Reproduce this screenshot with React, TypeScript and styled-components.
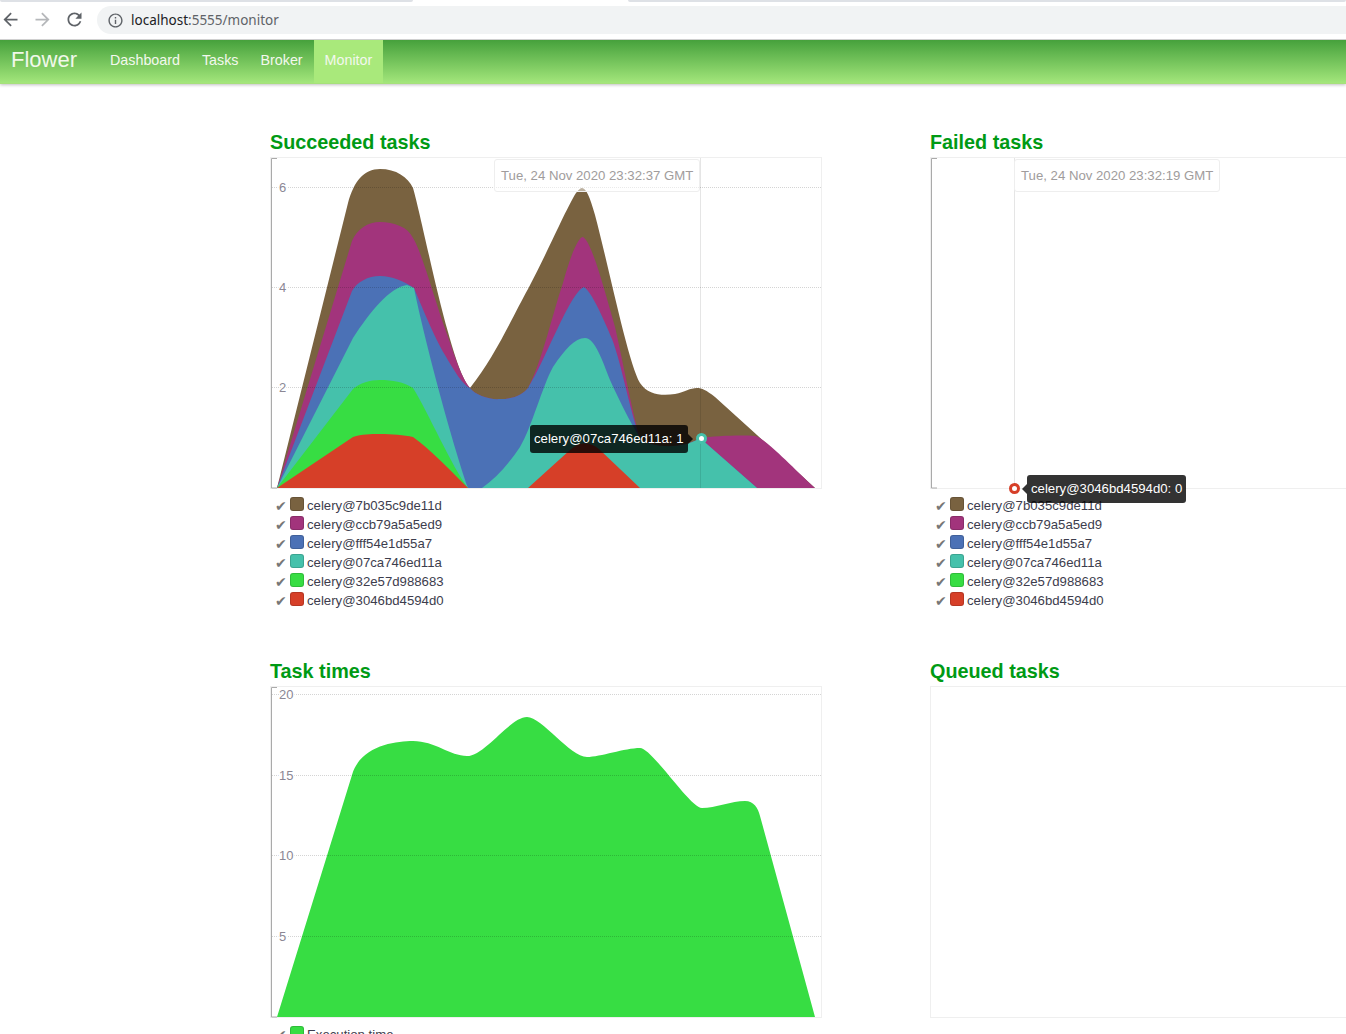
import React from "react";
import styled, { createGlobalStyle } from "styled-components";

const GlobalStyle = createGlobalStyle`
  html, body { margin: 0; padding: 0; background: #fff; height: 100%; overflow: hidden; }
  #root { height: 100%; overflow: hidden; }
  * { box-sizing: border-box; }
`;

const BrowserBar = styled.div`
  height: 40px;
  position: relative;
  display: flex;
  align-items: center;
  background: #fff;
  border-bottom: 1px solid #d0d0d0;
`;

const TabStrip = styled.div<{ $left: number; $width: number }>`
  position: absolute;
  top: 0;
  left: ${(p) => p.$left}px;
  width: ${(p) => p.$width}px;
  height: 2px;
  background: #dee1e6;
  border-radius: 0 0 4px 4px;
`;

const NavIcon = styled.button<{ $dim?: boolean }>`
  width: 32px;
  height: 28px;
  padding: 0;
  border: 0;
  background: none;
  display: flex;
  align-items: center;
  justify-content: center;
  color: ${(p) => (p.$dim ? "#b5b7ba" : "#5f6368")};
`;

const IconRow = styled.div`
  display: flex;
  margin-left: -6px;
  width: 103px;
`;

const UrlBar = styled.div`
  flex: 1;
  height: 28px;
  margin-top: 1px;
  display: flex;
  align-items: center;
  gap: 7px;
  padding-left: 10px;
  background: #f1f3f4;
  border-radius: 14px 0 0 14px;
  font: 13.5px "Noto Sans", sans-serif;
  color: #5f6368;
`;

const Host = styled.span`
  color: #202124;
`;

const NavBar = styled.nav`
  height: 44px;
  display: flex;
  align-items: stretch;
  background: linear-gradient(#46a13c, #a3e67b);
  border-bottom: 1px solid #a6e07a;
  box-shadow: 0 1px 3px rgba(0, 0, 0, 0.25);
  font-family: "Liberation Sans", Arial, sans-serif;
`;

const Brand = styled.a`
  width: 99px;
  padding-left: 11px;
  line-height: 40px;
  font-size: 22px;
  color: #f1f8ea;
`;

const NavLink = styled.a<{ $active?: boolean }>`
  padding: 0 11px;
  height: 43px;
  line-height: 41px;
  font-size: 14.3px;
  color: #f3f8ee;
  background: ${(p) => (p.$active ? "#a9e97b" : "transparent")};
`;

const Grid = styled.main`
  display: grid;
  grid-template-columns: 552px 552px;
  column-gap: 108px;
  row-gap: 48px;
  padding: 46px 0 0 270px;
  width: 1600px;
  font-family: "Liberation Sans", Arial, sans-serif;
`;

const Cell = styled.section``;

const Title = styled.h3`
  margin: 0 0 3px;
  height: 24px;
  line-height: 24px;
  font-size: 19.8px;
  font-weight: bold;
  color: #009a14;
`;

const ChartBox = styled.div`
  position: relative;
  width: 552px;
  height: 332px;
  border: 1px solid #efefef;
`;

const ChartSvg = styled.svg`
  display: block;
  position: absolute;
  left: -1px;
  top: -1px;
`;

const HoverLine = styled.div<{ $x: number }>`
  position: absolute;
  top: 0;
  bottom: 0;
  left: ${(p) => p.$x}px;
  width: 1px;
  background: rgba(0, 0, 0, 0.1);
`;

const DateLabel = styled.div<{ $x: number }>`
  position: absolute;
  top: 1px;
  left: ${(p) => p.$x}px;
  height: 33px;
  padding: 0 6px;
  line-height: 32px;
  font-size: 13.2px;
  white-space: nowrap;
  color: #a09c9c;
  background: rgba(255, 255, 255, 0.5);
  border: 1px solid #eee;
  border-radius: 3px;
`;

const Dot = styled.div<{ $x: number; $y: number; $color: string }>`
  position: absolute;
  left: ${(p) => p.$x}px;
  top: ${(p) => p.$y}px;
  width: 11px;
  height: 11px;
  background: #fff;
  border: 3px solid ${(p) => p.$color};
  border-radius: 50%;
`;

const Tip = styled.div<{ $x: number; $y: number; $side: "left" | "right" }>`
  position: absolute;
  z-index: 2;
  left: ${(p) => p.$x}px;
  top: ${(p) => p.$y}px;
  height: 28px;
  padding: 0 4px;
  line-height: 28px;
  font-size: 13.2px;
  white-space: nowrap;
  color: #fff;
  background: rgba(0, 0, 0, 0.8);
  border-radius: 3px;
  &::after {
    content: "";
    position: absolute;
    top: 9px;
    ${(p) => (p.$side === "right" ? "left: 100%;" : "right: 100%;")}
    border: 5px solid transparent;
    ${(p) =>
      p.$side === "right"
        ? "border-left-color: rgba(0, 0, 0, 0.8);"
        : "border-right-color: rgba(0, 0, 0, 0.8);"}
  }
`;

const Legend = styled.ul`
  list-style: none;
  margin: 0;
  padding: 7px 0 0 5px;
  height: 122px;
`;

const LegendRow = styled.li`
  display: flex;
  align-items: center;
  height: 19px;
  font-size: 13.2px;
  color: #3d3d4d;
`;

const Check = styled.span`
  width: 15px;
  font: 14px "DejaVu Sans", sans-serif;
  color: #777;
`;

const Swatch = styled.span<{ $color: string }>`
  width: 14px;
  height: 14px;
  margin: -4px 3px 0 0;
  background: ${(p) => p.$color};
  border: 1px solid rgba(0, 0, 0, 0.15);
  border-radius: 3px;
`;

const workers = [
  { name: "celery@7b035c9de11d", color: "#796240" },
  { name: "celery@ccb79a5a5ed9", color: "#a2347c" },
  { name: "celery@fff54e1d55a7", color: "#4b71b6" },
  { name: "celery@07ca746ed11a", color: "#45c1ab" },
  { name: "celery@32e57d988683", color: "#37dd43" },
  { name: "celery@3046bd4594d0", color: "#d63f28" },
];

// shared part of the lower layers: the dip between two samples
const dipLeft = "C205 238 220 243 230 242 C245 242 253 237 258 231";
const dipRight = "C380 292 415 292 430 281";

// outlines are in coordinates of the box, stacked layers painted back to front
const succeededAreas = [
  {
    color: "#796240",
    d: `M7 331 L78 46 C84 24 94 12 110 12 C126 12 138 20 143 31 C150 55 165 130 178 175 C185 200 192 222 200 231
      C225 200 245 155 258 132 C280 90 297 50 306 36 C309 32 311 31 312 31 C316 31 320 40 325 58
      C340 115 358 205 370 226 C378 238 392 239 405 237 C415 235 420 231 427 231 C432 231 436 233 445 240
      L487 278 L545 331 Z`,
  },
  {
    color: "#a2347c",
    d: `M7 331 L82 84 C87 72 98 65 110 65 C124 65 138 70 143 81 C152 95 165 145 178 180 C185 200 192 222 200 231
      ${dipLeft} C272 205 283 155 293 126 C300 100 308 80 313 80 C322 85 335 135 345 170 C352 200 362 255 370 281
      ${dipRight} C445 279 470 278 485 279 C495 281 520 308 545 331 Z`,
  },
  {
    color: "#4b71b6",
    d: `M7 331 L82 134 C87 125 98 119 110 119 C122 119 134 124 144 131 C150 145 165 182 175 198 C185 215 192 227 200 231
      ${dipLeft} C275 205 300 135 314 130 C322 135 335 165 342 182 C352 208 360 255 370 281
      ${dipRight} L487 331 Z`,
  },
  {
    color: "#45c1ab",
    d: `M7 331 L83 181 C100 155 120 130 137 128 L144 131 C155 185 182 285 198 331 L212 331
      C225 322 238 308 250 290 C262 270 272 230 283 210 C295 192 305 181 315 181
      C325 181 333 205 340 223 C350 245 360 265 370 281 ${dipRight} L487 331 Z`,
  },
  {
    color: "#37dd43",
    d: "M7 331 L83 232 C90 226 100 223 110 223 C122 223 134 225 143 231 C158 255 182 310 198 331 Z",
  },
  {
    color: "#d63f28",
    d: "M7 331 L83 280 C92 277 100 277 110 277 C122 277 134 278 143 280 C160 292 182 315 198 331 Z M258 331 L300 293 C310 284 320 284 330 293 L370 331 Z",
  },
];

const timesArea =
  "M7 331 L82 89 C90 60 125 55 143 55 C165 55 180 70 197 70 C215 70 240 31 257 31 C272 31 300 71 317 71 C330 71 355 62 370 62 C382 62 420 122 432 122 C445 122 462 115 475 115 C484 115 488 122 490 130 L545 331 Z";

type AxisProps = { ticks: { y: number; label: string }[] };

const Axis: React.FC<AxisProps> = ({ ticks }) => (
  <>
    {ticks.map((t) => (
      <g key={t.label}>
        <line x1={2} x2={551} y1={t.y + 0.5} y2={t.y + 0.5} stroke="rgba(0,0,0,0.17)" strokeDasharray="1 1" />
        <text
          x={9}
          y={t.y + 5}
          fontSize={13}
          fill="#8b8794"
          stroke="#fff"
          strokeWidth={3}
          paintOrder="stroke"
          fontFamily="'Liberation Sans', Arial, sans-serif"
        >
          {t.label}
        </text>
      </g>
    ))}
    <path d="M7 1.5 H1.5 V331 H7" fill="none" stroke="#aaa" strokeWidth={1} />
  </>
);

const WorkerLegend: React.FC = () => (
  <Legend>
    {workers.map((w) => (
      <LegendRow key={w.name}>
        <Check>✔</Check>
        <Swatch $color={w.color} />
        {w.name}
      </LegendRow>
    ))}
  </Legend>
);

const ChromeIcon: React.FC<{ d: string; size?: number }> = ({ d, size = 21 }) => (
  <svg width={size} height={size} viewBox="0 0 24 24" fill="currentColor">
    <path d={d} />
  </svg>
);

const App: React.FC = () => {
  return (
    <>
      <GlobalStyle />
      <BrowserBar>
        <TabStrip $left={0} $width={413} />
        <TabStrip $left={628} $width={718} />
        <IconRow>
          <NavIcon>
            <ChromeIcon d="M20 11H7.83l5.59-5.59L12 4l-8 8 8 8 1.41-1.41L7.83 13H20v-2z" />
          </NavIcon>
          <NavIcon $dim>
            <ChromeIcon d="M4 11h12.17l-5.59-5.59L12 4l8 8-8 8-1.41-1.41L16.17 13H4v-2z" />
          </NavIcon>
          <NavIcon>
            <ChromeIcon d="M17.65 6.35C16.2 4.9 14.21 4 12 4c-4.42 0-7.99 3.58-7.99 8s3.57 8 7.99 8c3.73 0 6.84-2.55 7.73-6h-2.08c-.82 2.33-3.04 4-5.65 4-3.31 0-6-2.69-6-6s2.69-6 6-6c1.66 0 3.14.69 4.22 1.78L13 11h7V4l-2.35 2.35z" />
          </NavIcon>
        </IconRow>
        <UrlBar>
          <ChromeIcon
            size={17}
            d="M11 7h2v2h-2zm0 4h2v6h-2zm1-9C6.48 2 2 6.48 2 12s4.48 10 10 10 10-4.48 10-10S17.52 2 12 2zm0 18c-4.41 0-8-3.59-8-8s3.59-8 8-8 8 3.59 8 8-3.59 8-8 8z"
          />
          <span>
            <Host>localhost</Host>:5555/monitor
          </span>
        </UrlBar>
      </BrowserBar>
      <NavBar>
        <Brand>Flower</Brand>
        <NavLink>Dashboard</NavLink>
        <NavLink>Tasks</NavLink>
        <NavLink>Broker</NavLink>
        <NavLink $active>Monitor</NavLink>
      </NavBar>
      <Grid>
        <Cell>
          <Title>Succeeded tasks</Title>
          <ChartBox>
            <ChartSvg width={552} height={332}>
              {succeededAreas.map((a) => (
                <path key={a.color} d={a.d} fill={a.color} />
              ))}
              <Axis
                ticks={[
                  { y: 30, label: "6" },
                  { y: 130, label: "4" },
                  { y: 230, label: "2" },
                ]}
              />
            </ChartSvg>
            <HoverLine $x={429} />
            <DateLabel $x={223}>Tue, 24 Nov 2020 23:32:37 GMT</DateLabel>
            <Dot $x={425} $y={275} $color="#45c1ab" />
            <Tip $x={259} $y={267} $side="right">celery@07ca746ed11a: 1</Tip>
          </ChartBox>
          <WorkerLegend />
        </Cell>
        <Cell>
          <Title>Failed tasks</Title>
          <ChartBox>
            <ChartSvg width={552} height={332}>
              <path d="M7 1.5 H1.5 V331 H7" fill="none" stroke="#aaa" />
            </ChartSvg>
            <HoverLine $x={83} />
            <DateLabel $x={83}>Tue, 24 Nov 2020 23:32:19 GMT</DateLabel>
            <Dot $x={78} $y={325} $color="#d63f28" />
            <Tip $x={96} $y={317} $side="left">celery@3046bd4594d0: 0</Tip>
          </ChartBox>
          <WorkerLegend />
        </Cell>
        <Cell>
          <Title>Task times</Title>
          <ChartBox>
            <ChartSvg width={552} height={332}>
              <path d={timesArea} fill="#37dd43" />
              <Axis
                ticks={[
                  { y: 8, label: "20" },
                  { y: 89, label: "15" },
                  { y: 169, label: "10" },
                  { y: 250, label: "5" },
                ]}
              />
            </ChartSvg>
          </ChartBox>
          <Legend>
            <LegendRow>
              <Check>✔</Check>
              <Swatch $color="#37dd43" />
              Execution time
            </LegendRow>
          </Legend>
        </Cell>
        <Cell>
          <Title>Queued tasks</Title>
          <ChartBox />
        </Cell>
      </Grid>
    </>
  );
};

export default App;
